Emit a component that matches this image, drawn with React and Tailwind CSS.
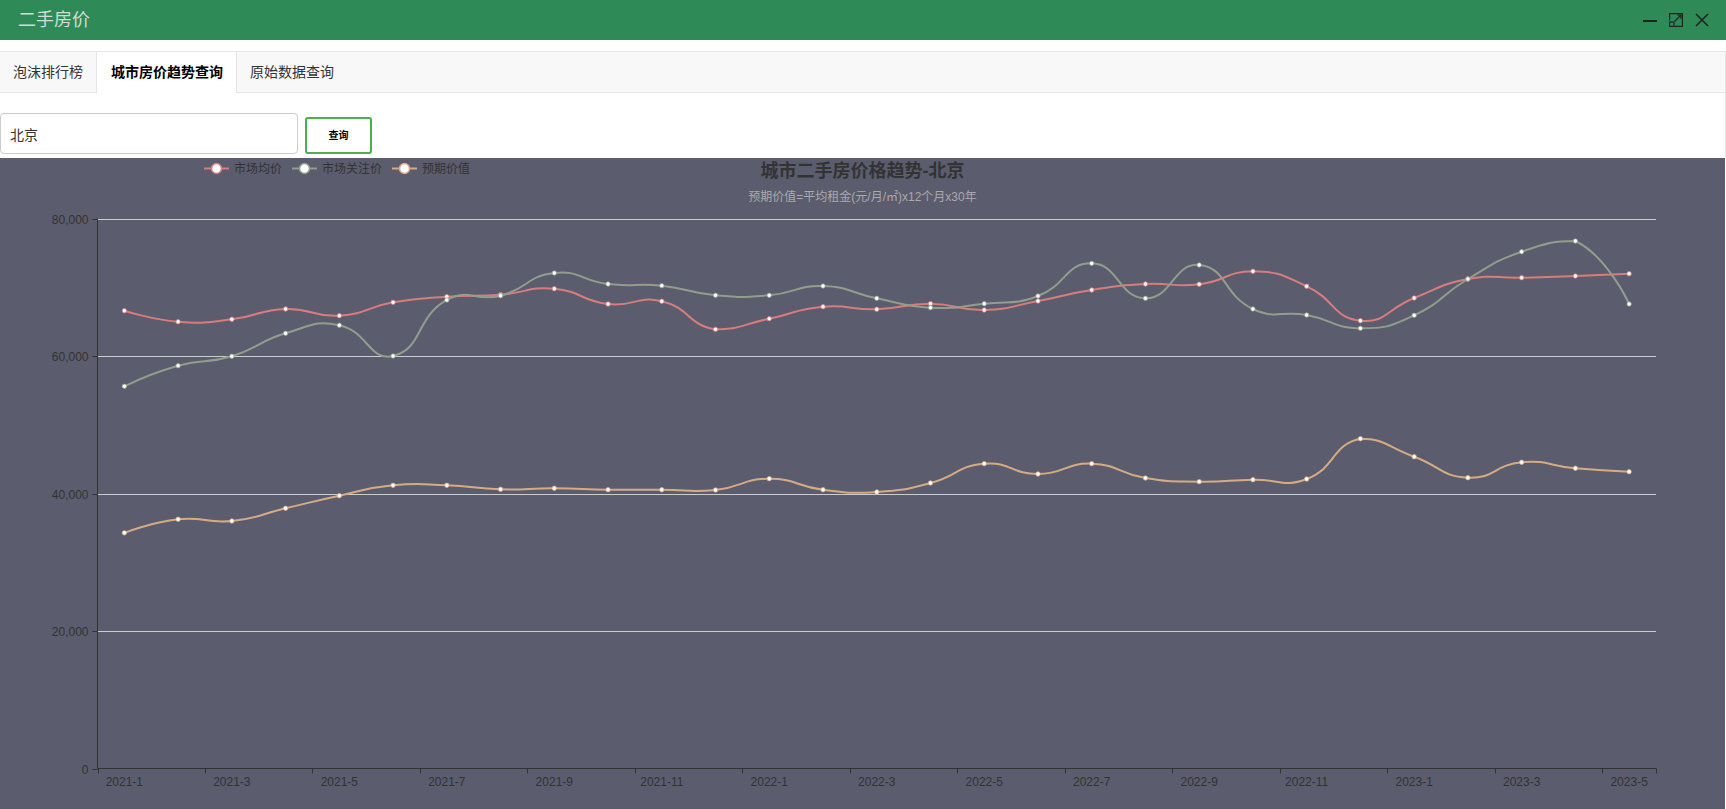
import React from "react";

// 2021-1 … 2023-5, one entry per month
const MONTHS = Array.from({ length: 29 }, (_, i) => `${2021 + Math.floor(i / 12)}-${(i % 12) + 1}`);

const SERIES = [
  {
    name: "市场均价",
    color: "#d87c7c",
    data: [66590, 64990, 65340, 66840, 65860, 67810, 68630, 68920, 69790, 67560, 67960, 63880, 65430, 67170, 66790, 67610, 66690, 68000, 69600, 70470, 70430, 72320, 70140, 65130, 68440, 71200, 71390, 71640, 71970],
  },
  {
    name: "市场关注价",
    color: "#919e8b",
    data: [55590, 58590, 59960, 63300, 64470, 60000, 68150, 68770, 72070, 70470, 70230, 68830, 68830, 70180, 68390, 67030, 67610, 68730, 73480, 68390, 73240, 66840, 65960, 64030, 65920, 71200, 75170, 76730, 67560],
  },
  {
    name: "预期价值",
    color: "#d7ab82",
    data: [34280, 36250, 36000, 37850, 39680, 41190, 41190, 40610, 40760, 40550, 40550, 40510, 42150, 40550, 40220, 41530, 44340, 42840, 44340, 42250, 41720, 42010, 42110, 47970, 45350, 42300, 44540, 43670, 43170],
  },
];

const W = 1725;
const H = 651;
const GRID = { left: 97.5, right: 1656, top: 60.5, bottom: 610.5 };
const MAX = 80000;
const band = (GRID.right - GRID.left) / MONTHS.length;
const xOf = (i) => GRID.left + (i + 0.5) * band;
const yOf = (v) => GRID.bottom - (v / MAX) * (GRID.bottom - GRID.top);

// bezier smoothing as the chart lib does it for smooth: true
// (control points kept inside the series' bounding box)
function smoothPath(pts, smooth = 0.5) {
  const xs = pts.map((p) => p[0]);
  const ys = pts.map((p) => p[1]);
  const lo = [Math.min(...xs), Math.min(...ys)];
  const hi = [Math.max(...xs), Math.max(...ys)];
  const clamp = (p) => [
    Math.min(hi[0], Math.max(lo[0], p[0])),
    Math.min(hi[1], Math.max(lo[1], p[1])),
  ];

  let d = `M${pts[0][0]},${pts[0][1]}`;
  let cp0 = pts[0];
  for (let i = 1; i < pts.length; i++) {
    const [x, y] = pts[i];
    const [px, py] = pts[i - 1];
    let cp1 = [x, y];
    let next = [x, y];
    if (i < pts.length - 1) {
      const [nx, ny] = pts[i + 1];
      const vx = nx - px;
      const vy = ny - py;
      const l0 = Math.hypot(x - px, y - py);
      const l1 = Math.hypot(nx - x, ny - y);
      const r = l1 / (l0 + l1);
      cp1 = [x - vx * smooth * (1 - r), y - vy * smooth * (1 - r)];
      next = [x + vx * smooth * r, y + vy * smooth * r];
    }
    const a = clamp(cp0);
    const b = clamp(cp1);
    d += ` C${a[0]},${a[1]} ${b[0]},${b[1]} ${x},${y}`;
    cp0 = next;
  }
  return d;
}

function TrendChart() {
  const ticks = [0, 20000, 40000, 60000, 80000];
  const xTicks = [];
  for (let i = 0; i < MONTHS.length; i += 2) xTicks.push(i);
  xTicks.push(MONTHS.length);

  let lx = 204;
  const legend = SERIES.map((s) => {
    const item = { ...s, x: lx };
    lx += 25 + 5 + s.name.length * 12 + 10;
    return item;
  });

  return (
    <svg width={W} height={H} className="block">
      {/* title */}
      <text x={862.5} y={13} textAnchor="middle" dominantBaseline="central" fontSize="18" fontWeight="bold" fill="#333">
        城市二手房价格趋势-北京
      </text>
      <text x={862.5} y={39} textAnchor="middle" dominantBaseline="central" fontSize="12" fill="#aaa">
        预期价值=平均租金(元/月/㎡)x12个月x30年
      </text>

      {/* legend */}
      {legend.map((s) => (
        <g key={s.name}>
          <line x1={s.x} y1={10.5} x2={s.x + 25} y2={10.5} stroke={s.color} strokeWidth="2" />
          <circle cx={s.x + 12.5} cy={10.5} r={5} fill="#fff" stroke={s.color} strokeWidth="1.5" />
          <text x={s.x + 30} y={10.5} dominantBaseline="central" fontSize="12" fill="#333">
            {s.name}
          </text>
        </g>
      ))}

      {/* split lines + y labels */}
      {ticks.map((t) => {
        const y = Math.round(yOf(t)) + 0.5;
        return (
          <g key={t}>
            {t > 0 && <line x1={GRID.left} y1={y} x2={GRID.right} y2={y} stroke="#ccc" strokeWidth="1" />}
            <line x1={GRID.left - 5} y1={y} x2={GRID.left} y2={y} stroke="#333" strokeWidth="1" />
            <text x={GRID.left - 9} y={y} textAnchor="end" dominantBaseline="central" fontSize="12" fill="#333">
              {t.toLocaleString("en-US")}
            </text>
          </g>
        );
      })}

      {/* axes */}
      <line x1={GRID.left} y1={GRID.top} x2={GRID.left} y2={GRID.bottom} stroke="#333" strokeWidth="1" />
      <line x1={GRID.left} y1={GRID.bottom} x2={GRID.right} y2={GRID.bottom} stroke="#333" strokeWidth="1" />
      {xTicks.map((i) => {
        const x = Math.round(GRID.left + i * band) + 0.5;
        return <line key={i} x1={x} y1={GRID.bottom} x2={x} y2={GRID.bottom + 5} stroke="#333" strokeWidth="1" />;
      })}
      {MONTHS.map((m, i) =>
        i % 2 === 0 ? (
          <text key={m} x={xOf(i)} y={624} textAnchor="middle" dominantBaseline="central" fontSize="12" fill="#333">
            {m}
          </text>
        ) : null
      )}

      {/* series */}
      {SERIES.map((s) => {
        const pts = s.data.map((v, i) => [xOf(i), yOf(v)]);
        return (
          <g key={s.name}>
            <path d={smoothPath(pts)} fill="none" stroke={s.color} strokeWidth="2" />
            {pts.map(([x, y], i) => (
              <circle key={i} cx={x} cy={y} r={2.2} fill="#fff" stroke={s.color} strokeWidth="0.8" />
            ))}
          </g>
        );
      })}
    </svg>
  );
}

function WindowIcons() {
  return (
    <div className="flex items-center gap-[12px] pr-[17px]">
      <svg width="14" height="14" viewBox="0 0 14 14">
        <rect x="0" y="7" width="14" height="2" fill="#222" />
      </svg>
      <svg width="14" height="14" viewBox="0 0 14 14" fill="none" stroke="#222" strokeWidth="1.2">
        <path d="M0.6 7.5V0.6H13.4V13.4H5.5" />
        <rect x="0.6" y="9" width="4.4" height="4.4" />
        <path d="M5.5 8.5L12 2M8 2H12V6" />
      </svg>
      <svg width="14" height="14" viewBox="0 0 14 14" stroke="#222" strokeWidth="1.6">
        <path d="M1 1L13 13M13 1L1 13" />
      </svg>
    </div>
  );
}

export default function App() {
  const tabs = ["泡沫排行榜", "城市房价趋势查询", "原始数据查询"];
  const active = 1;

  return (
    <div className="w-[1726px] h-[809px] overflow-hidden bg-white font-['Liberation_Sans','Noto_Sans_CJK_SC',sans-serif]">
      <header className="h-[40px] bg-[#2e8b57] flex items-center justify-between">
        <h1 className="pl-[18px] text-[18px] leading-none text-[#d3dbd6]">二手房价</h1>
        <WindowIcons />
      </header>

      <div className="mt-[11px] h-[42px] flex items-start border-y border-r border-[#e6e6e6] bg-[#f8f8f8]">
        {tabs.map((t, i) =>
          i === active ? (
            <div key={t} className="h-[41px] flex items-center bg-white border-x border-[#e6e6e6] pl-[14px] pr-[13px] text-[14px] font-bold text-black">
              {t}
            </div>
          ) : (
            <div key={t} className="h-[40px] flex items-center px-[13px] text-[14px] text-[#333]">
              {t}
            </div>
          )
        )}
      </div>

      <div className="h-[65px] w-[1726px] border-r border-[#e6e6e6] pt-[19px] flex items-end gap-[7px] pb-[4px]">
        <input
          defaultValue="北京"
          className="w-[298px] h-[41px] border border-[#ccc] rounded-[4px] pl-[9px] text-[14px] text-[#333] outline-none"
        />
        <button className="w-[67px] h-[37px] border-2 border-[#4cae4c] rounded-[3px] bg-white text-[10px] font-bold text-black">
          查询
        </button>
      </div>

      <div className="w-[1725px] h-[651px] bg-[#5b5c6e]">
        <TrendChart />
      </div>
    </div>
  );
}
